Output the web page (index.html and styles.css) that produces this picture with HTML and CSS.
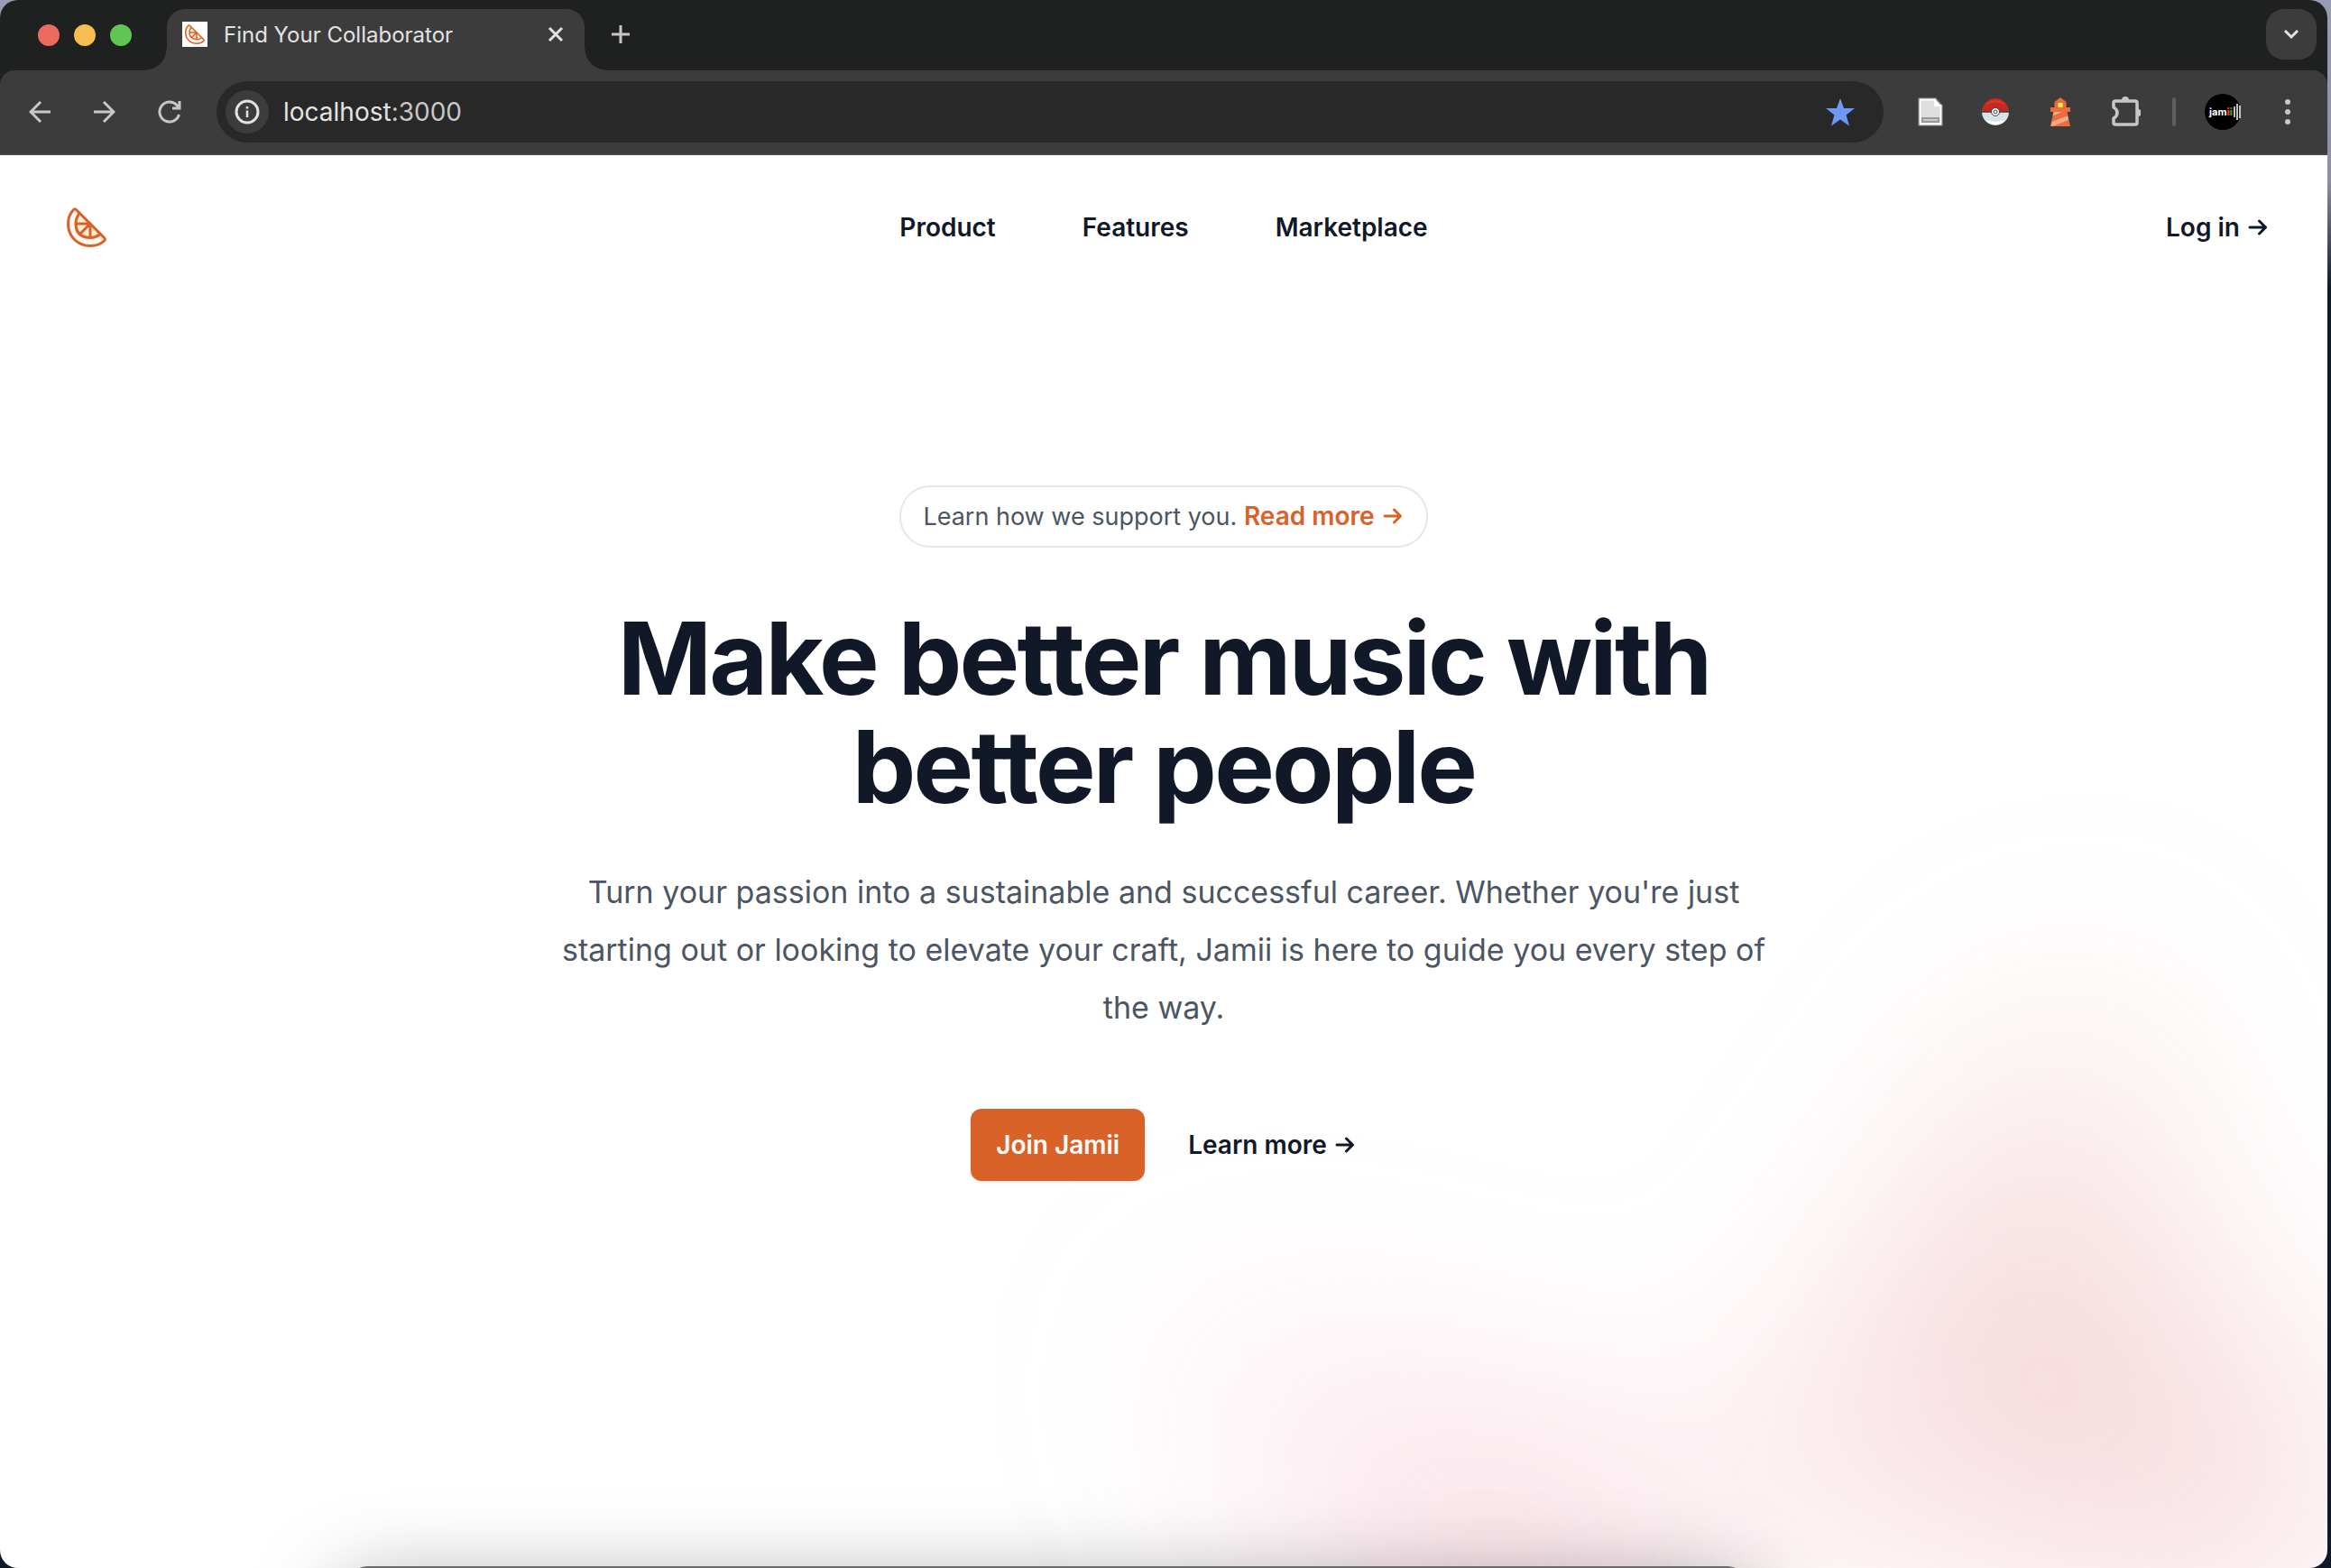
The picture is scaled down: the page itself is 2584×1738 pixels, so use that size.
FILE: index.html
```html
<!DOCTYPE html>
<html lang="en">
<head>
<meta charset="utf-8">
<meta name="viewport" content="width=device-width, initial-scale=1">
<title>Find Your Collaborator</title>
<link rel="stylesheet" href="styles.css">
</head>
<body>
<svg class="sprite" aria-hidden="true">
  <symbol id="orange" viewBox="0 0 44 44">
    <path d="M9 2.500C4 6 1.500 13 1.500 18C1.500 32 12 42.500 26 42.500C33 42.500 38.500 40 42 36.500Q43 35 41.500 33.500L11 3Q10 2 9 2.500Z" fill="#fff7ed"/>
    <path d="M14 7Q10 12 10 18Q10 33 26 33.500Q32 33.500 37 30Z" fill="#ffedd5"/>
    <g fill="none" stroke="#d96229" stroke-width="3" stroke-linejoin="round" stroke-linecap="round">
      <path d="M7.500 2.500C4 6 1.500 12 1.500 18C1.500 32 12 42.500 26 42.500C33 42.500 38.500 40 42 36.500Q43 35 41.500 33.500L10.500 2.500Q9 1 7.500 2.500Z"/>
      <path d="M14 6.500Q10 11.500 10 18Q10 33 26 33.500Q32 33.500 37 29.500M10.500 18H26V33M26 18L15 29"/>
    </g>
  </symbol>
  <symbol id="arrow" viewBox="0 0 22 20">
    <path d="M2 10H19M12.500 3L19.500 10L12.500 17" fill="none" stroke="currentColor" stroke-width="3" stroke-linecap="round" stroke-linejoin="round"/>
  </symbol>
</svg>
<div class="window">
  <div class="tabstrip">
    <div class="lights">
      <button class="light red" aria-label="Close window"></button>
      <button class="light yellow" aria-label="Minimize window"></button>
      <button class="light green" aria-label="Zoom window"></button>
    </div>
    <div class="tab">
      <span class="favicon"><svg width="22" height="22"><use href="#orange"/></svg></span>
      <span class="tab-title">Find Your Collaborator</span>
      <button class="icon-btn" aria-label="Close tab"><svg width="18" height="18" viewBox="0 0 18 18"><path d="M2 2L16 16M16 2L2 16" stroke="#e3e3e3" stroke-width="3"/></svg></button>
    </div>
    <button class="icon-btn new-tab" aria-label="New tab"><svg width="20" height="20" viewBox="0 0 20 20"><path d="M10 0V20M0 10H20" stroke="#c7c7c7" stroke-width="3"/></svg></button>
    <button class="tab-search" aria-label="Search tabs"><svg width="18" height="12" viewBox="0 0 18 12"><path d="M2 2L9 9L16 2" fill="none" stroke="#e3e3e3" stroke-width="3"/></svg></button>
  </div>

  <div class="toolbar">
    <div class="nav-buttons">
      <button class="icon-btn" aria-label="Back"><svg width="24" height="24" viewBox="0 0 24 24"><path d="M24 12H2M13 1L2 12L13 23" fill="none" stroke="#c7c7c7" stroke-width="3"/></svg></button>
      <button class="icon-btn" aria-label="Forward"><svg width="24" height="24" viewBox="0 0 24 24"><path d="M0 12H22M11 1L22 12L11 23" fill="none" stroke="#c7c7c7" stroke-width="3"/></svg></button>
      <button class="icon-btn" aria-label="Reload"><svg width="26" height="26" viewBox="0 0 26 26"><path d="M23.500 16A11 11 0 1 1 21 5.500L23.500 8.500M24 1V9H16" fill="none" stroke="#c7c7c7" stroke-width="3"/></svg></button>
    </div>
    <div class="omnibox">
      <button class="site-info" aria-label="Site information"><svg width="28" height="28" viewBox="0 0 28 28"><circle cx="14" cy="14" r="12" fill="none" stroke="#e3e3e3" stroke-width="3"/><path d="M14 12.500V20M14 8V10.500" stroke="#e3e3e3" stroke-width="2.500"/></svg></button>
      <span class="url">localhost<span class="port">:3000</span></span>
      <button class="icon-btn" aria-label="Bookmark"><svg width="32" height="31" viewBox="0 0 32 31"><path d="M16 0L20 11H32L22.500 18.500L26 30.500L16 23.500L6 30.500L9.500 18.500L0 11H12Z" fill="#6d9af1"/></svg></button>
    </div>
    <div class="extensions">
      <button class="icon-btn" aria-label="Reader"><svg width="28" height="32" viewBox="0 0 28 32"><path d="M1 1H20L27 9V31H1Z" fill="#dedede" stroke="#777" stroke-width="1.500"/><path d="M2.500 2.500H19V9H25.500V29.500H2.500Z" fill="#dedede" stroke="#fff" stroke-width="1.800"/><path d="M19 2.500L25.500 9.500H19Z" fill="#fff"/><path d="M4 22H24V28H4Z" fill="#989898"/><path d="M6 25H22" stroke="#c9c9c9" stroke-width="2"/></svg></button>
      <button class="icon-btn" aria-label="Pokeball"><svg width="32" height="32" viewBox="0 0 32 32"><path d="M1 16A15 15 0 0 1 31 16Z" fill="#c42a1f"/><path d="M4 9A15 15 0 0 1 28 9Q16 2 4 9Z" fill="#e3352a"/><path d="M1 16A15 15 0 0 0 31 16Z" fill="#d8e3e8"/><path d="M4 24Q16 30 28 24A15 15 0 0 1 4 24Z" fill="#fff"/><path d="M1 16H31" stroke="#3c4043" stroke-width="1.500"/><circle cx="16" cy="16" r="4.500" fill="#fff" stroke="#3c4043"/><circle cx="16" cy="16" r="2" fill="#fff" stroke="#3c4043"/></svg></button>
      <button class="icon-btn" aria-label="Lighthouse"><svg width="24" height="32" viewBox="0 0 24 32"><path d="M12 0L18.500 5V11H23V16H19.500L23 32H1L4.500 16H1V11H5.500V5Z" fill="#ed6c3d"/><path d="M4.500 16H14L3.500 20.500ZM2.500 27L20 20.500L21 25L3 32H1.500Z" fill="#f5a78b"/><path d="M9.500 6H14.500V11H9.500Z" fill="#ffee4a"/></svg></button>
      <button class="icon-btn" aria-label="Extensions"><svg width="34" height="34" viewBox="-2 1 34 34"><path d="M4 6H26Q28 6 28 8V30Q28 32 26 32H4Q2 32 2 30V25Q6 23 6 19Q6 15 2 13V8Q2 6 4 6Z" fill="none" stroke="#c7c7c7" stroke-width="3.500" stroke-linejoin="round"/><path d="M11 5A4 4 0 0 1 19 5ZM29 15A4 4 0 0 1 29 23Z" fill="#c7c7c7"/></svg></button>
    </div>
    <span class="divider"></span>
    <button class="avatar" aria-label="Profile"><span>jam<b class="i-red">i</b><b class="i-green">i</b></span><svg width="8" height="18" viewBox="0 0 8 18"><path d="M1 3V15M4 0V18M7 2V16" stroke="#fff" stroke-width="1.500"/></svg></button>
    <button class="icon-btn menu" aria-label="Menu"><svg width="6" height="32" viewBox="0 0 6 32"><g fill="#c7c7c7"><circle cx="3" cy="5" r="3"/><circle cx="3" cy="16" r="3"/><circle cx="3" cy="27" r="3"/></g></svg></button>
  </div>

  <div class="page">
    <div class="glow" aria-hidden="true"><div class="glow-shape"></div></div>
    <header class="site-header">
      <a class="logo" href="#" aria-label="Jamii"><svg width="44" height="44"><use href="#orange"/></svg></a>
      <nav class="site-nav">
        <a href="#">Product</a>
        <a href="#">Features</a>
        <a href="#">Marketplace</a>
      </nav>
      <a class="login" href="#">Log in <svg class="arrow" width="22" height="20"><use href="#arrow"/></svg></a>
    </header>
    <main class="hero">
      <p class="notice">Learn how we support you. <a href="#">Read more <svg class="arrow" width="22" height="20"><use href="#arrow"/></svg></a></p>
      <h1>Make better music with better people</h1>
      <p class="lead">Turn your passion into a sustainable and successful career. Whether you're just starting out or looking to elevate your craft, Jamii is here to guide you every step of the way.</p>
      <div class="actions">
        <button class="join">Join Jamii</button>
        <a class="learn" href="#">Learn more <svg class="arrow" width="22" height="20"><use href="#arrow"/></svg></a>
      </div>
    </main>
    <div class="under-window" aria-hidden="true"></div>
  </div>
</div>
</body>
</html>
```

FILE: styles.css
```css
* { box-sizing: border-box; }

body {
  margin: 0;
  min-height: 100vh;
  display: flex;
  padding-right: 4px;
  background: linear-gradient(#9a9bb4 0, #8d8fa5 200px, #0d1a29 320px, #0d1a29);
  font-family: Inter, "Liberation Sans", sans-serif;
  color: #111827;
}

button {
  border: 0;
  padding: 0;
  background: none;
  font: inherit;
  color: inherit;
}

a { color: inherit; text-decoration: none; }
svg { display: block; flex: none; }
.sprite { position: absolute; width: 0; height: 0; }

.window {
  flex: 1;
  display: flex;
  flex-direction: column;
  border-radius: 20px;
  overflow: hidden;
  background: #1f2120;
}

.icon-btn {
  display: grid;
  place-items: center;
  width: 40px;
  height: 40px;
}

/* Tab strip */
.tabstrip {
  display: flex;
  align-items: flex-end;
  height: 78px;
  padding-right: 12px;
}

.lights {
  display: flex;
  gap: 16px;
  width: 185px;
  height: 78px;
  padding-left: 42px;
  align-items: center;
}

.light { width: 24px; height: 24px; border-radius: 50%; }
.red { background: #ed6a5f; }
.yellow { background: #f5bf4f; }
.green { background: #61c554; }

.tab {
  position: relative;
  display: flex;
  align-items: center;
  width: 463px;
  height: 68px;
  padding: 0 12px 12px 17px;
  border-radius: 20px 20px 0 0;
  background: #3c3c3c;
  color: #e3e3e3;
  font-size: 24px;
}

.tab::before,
.tab::after {
  content: "";
  position: absolute;
  bottom: 0;
  width: 24px;
  height: 24px;
}

.tab::before { right: 100%; background: radial-gradient(circle at 0 0, transparent 23px, #3c3c3c 24px); }
.tab::after { left: 100%; background: radial-gradient(circle at 100% 0, transparent 23px, #3c3c3c 24px); }

.favicon {
  display: grid;
  place-items: center;
  width: 28px;
  height: 28px;
  margin-right: 18px;
  background: #fff;
}

.tab-title { flex: 1; white-space: nowrap; }
.new-tab { margin: 0 auto 20px 20px; }

.tab-search {
  display: grid;
  place-items: center;
  width: 56px;
  height: 56px;
  margin-bottom: 12px;
  border-radius: 20px;
  background: #3c3c3c;
}

/* Toolbar */
.toolbar {
  display: flex;
  align-items: center;
  height: 94px;
  padding: 0 24px;
  border-radius: 16px 16px 0 0;
  border-bottom: 2px solid #474747;
  background: #3c3c3c;
}

.nav-buttons { display: flex; gap: 32px; margin-right: 32px; }

.omnibox {
  flex: 1;
  display: flex;
  align-items: center;
  height: 68px;
  padding: 0 28px 0 10px;
  border-radius: 34px;
  background: #282828;
  color: #e3e3e3;
  font-size: 28px;
}

.site-info {
  display: grid;
  place-items: center;
  width: 48px;
  height: 48px;
  margin-right: 16px;
  border-radius: 50%;
  background: #3c3c3c;
}

.url { flex: 1; }
.port { color: #c7c7c7; }
.extensions { display: flex; gap: 32px; margin-left: 32px; }

.divider {
  width: 4px;
  height: 32px;
  margin: 0 32px;
  border-radius: 2px;
  background: #5f5f5f;
}

.avatar {
  display: flex;
  align-items: center;
  justify-content: flex-end;
  gap: 1px;
  width: 40px;
  height: 40px;
  border-radius: 50%;
  background: #000;
  color: #fff;
  font-size: 11px;
  font-weight: 700;
}

.i-red { color: #e0362c; }
.i-green { color: #2f9a3a; }
.menu { margin-left: 32px; }

/* Page */
.page {
  position: relative;
  flex: 1;
  overflow: hidden;
  background: #fff;
}

.glow {
  position: absolute;
  top: 432px;
  left: 0;
  right: 0;
  overflow: hidden;
  filter: blur(128px);
}

.glow-shape {
  width: 2310px;
  aspect-ratio: 1155 / 678;
  margin-left: calc(50% - 3px);
  background: linear-gradient(to top right, #f082b0, #c85a28);
  opacity: .27;
  clip-path: polygon(74.1% 44.1%, 100% 61.6%, 97.5% 26.9%, 85.5% 0.1%, 80.7% 2%, 72.5% 32.5%, 60.2% 62.4%, 52.4% 68.1%, 47.5% 58.3%, 45.2% 34.5%, 27.5% 76.7%, 0.1% 64.9%, 17.9% 100%, 27.6% 76.8%, 76.1% 97.7%, 74.1% 44.1%);
}

.site-header {
  position: relative;
  display: grid;
  grid-template-columns: 1fr auto 1fr;
  align-items: center;
  padding: 48px 64px;
  font-size: 28px;
  font-weight: 600;
  line-height: 48px;
}

.logo {
  display: grid;
  place-items: center;
  width: 64px;
  height: 64px;
}

.site-nav { display: flex; gap: 96px; }

.arrow { display: inline-block; margin: 0 2px; }
.login { justify-self: end; }

.hero {
  position: relative;
  display: flex;
  flex-direction: column;
  align-items: center;
  max-width: 1360px;
  margin: 0 auto;
  padding: 208px 0;
  text-align: center;
}

.notice {
  margin: 0 0 64px;
  padding: 8px 24px;
  border-radius: 32px;
  box-shadow: 0 0 0 2px #e7e7e8;
  color: #4b5563;
  font-size: 27px;
  line-height: 48px;
}

.notice a { color: #d96229; font-size: 28px; font-weight: 600; }

h1 {
  margin: 0;
  max-width: 1344px;
  font-size: 112px;
  font-weight: 700;
  line-height: 120px;
  letter-spacing: -0.025em;
}

.lead {
  margin: 48px 0 80px;
  color: #4b5563;
  font-size: 34px;
  line-height: 64px;
}

.actions {
  display: flex;
  align-items: center;
  gap: 48px;
  font-size: 28px;
  font-weight: 600;
  line-height: 48px;
}

.join {
  height: 80px;
  padding: 0 28px;
  border-radius: 12px;
  background: #d96229;
  box-shadow: 0 2px 4px rgba(0, 0, 0, .05);
  color: #fff;
}

.under-window {
  position: absolute;
  top: calc(100% - 2px);
  left: 15%;
  right: 25%;
  height: 100px;
  border-radius: 20px;
  background: #6b6b6b;
  box-shadow: 0 36px 100px 10px rgba(0, 0, 0, .4);
}
```
